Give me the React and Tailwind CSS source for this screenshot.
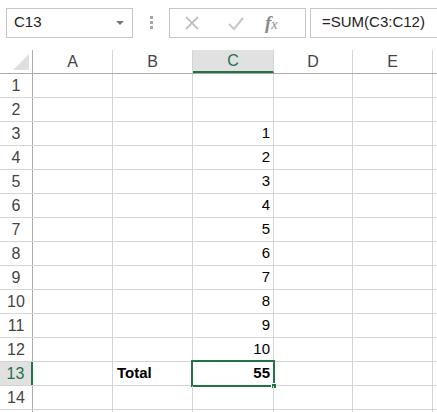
import React from "react";

const cols = [
  { key: "A", w: 80 },
  { key: "B", w: 80 },
  { key: "C", w: 81 },
  { key: "D", w: 79 },
  { key: "E", w: 80 },
  { key: "F", w: 80 },
];

const values = { 3: "1", 4: "2", 5: "3", 6: "4", 7: "5", 8: "6", 9: "7", 10: "8", 11: "9", 12: "10" };

const Toolbar = () => (
  <div className="flex items-center h-[50px] pt-[8px] pb-[13px] pl-[6px] bg-white">
    <div className="flex items-center justify-between w-[127px] h-[30px] border border-[#c6c6c6] pl-[7px] pr-[8px]">
      <span className="text-[15px] text-[#222]">C13</span>
      <span className="w-0 h-0 border-l-[4px] border-r-[4px] border-t-[4px] border-l-transparent border-r-transparent border-t-[#777]" />
    </div>
    <div className="flex flex-col gap-[2px] ml-[17px] mr-[16px]">
      <span className="w-[3px] h-[3px] bg-[#a6a6a6]" />
      <span className="w-[3px] h-[3px] bg-[#a6a6a6]" />
      <span className="w-[3px] h-[3px] bg-[#a6a6a6]" />
    </div>
    <div className="flex items-center w-[137px] h-[30px] border border-[#c6c6c6]">
      <svg width="16" height="16" viewBox="0 0 16 16" className="ml-[14px]">
        <path d="M2 2 L14 14 M14 2 L2 14" stroke="#b4b4b4" strokeWidth="1.6" fill="none" />
      </svg>
      <svg width="18" height="16" viewBox="0 0 18 16" className="ml-[27px]">
        <path d="M2 9 L7 14 L16 3" stroke="#c8c8c8" strokeWidth="2" fill="none" />
      </svg>
      <span className="ml-[20px] text-[19px] italic font-bold text-[#8a8a8a] font-['Liberation_Serif',serif] leading-none">
        f<span className="text-[14px] font-normal">x</span>
      </span>
    </div>
    <div className="flex items-center flex-1 h-[30px] ml-[4px] border border-[#c6c6c6] border-r-0 pl-[11px]">
      <span className="text-[15px] text-[#222] whitespace-nowrap">=SUM(C3:C12)</span>
    </div>
  </div>
);

const HeaderRow = () => (
  <div className="flex h-[24px] border-b border-[#ababab]">
    <div className="relative w-[33px] shrink-0 border-r border-[#ababab]">
      <svg className="absolute right-[3px] bottom-[3px]" width="16" height="16" viewBox="0 0 16 16">
        <path d="M16 0 L16 16 L0 16 Z" fill="#dfdfdf" />
      </svg>
    </div>
    {cols.map((c) => (
      <div
        key={c.key}
        style={{ width: c.w }}
        className={
          c.key === "C"
            ? "shrink-0 flex items-center justify-center border-r border-[#d4d4d4] bg-[#e1e1e1] border-b-2 border-b-[#217346] text-[#217346] text-[16px]"
            : "shrink-0 flex items-center justify-center border-r border-[#d4d4d4] text-[#444] text-[16px]"
        }
      >
        {c.key === "F" ? null : c.key}
      </div>
    ))}
  </div>
);

const Row = ({ n }) => {
  const sel = n === 13;
  return (
    <div className="flex h-[24px] border-b border-[#d4d4d4]">
      <div
        className={
          sel
            ? "w-[33px] shrink-0 flex items-center justify-center bg-[#e1e1e1] border-r-2 border-[#217346] text-[#217346] text-[16px]"
            : "w-[33px] shrink-0 flex items-center justify-center border-r border-[#ababab] text-[#444] text-[16px]"
        }
      >
        {n}
      </div>
      {cols.map((c) => {
        let content = null;
        if (c.key === "C" && values[n]) content = <span className="text-[15px] text-black">{values[n]}</span>;
        if (c.key === "C" && sel) content = <span className="text-[15px] font-bold text-black">55</span>;
        if (c.key === "B" && sel) content = <span className="text-[15px] font-bold text-black">Total</span>;
        const isSelCell = c.key === "C" && sel;
        return (
          <div
            key={c.key}
            style={{ width: c.w }}
            className={
              "relative shrink-0 flex items-end border-r border-[#d4d4d4] pb-[1px] " +
              (c.key === "B" ? "justify-start pl-[4px]" : "justify-end pr-[3px]")
            }
          >
            {content}
            {isSelCell && (
              <>
                <span className="absolute -left-[2px] -top-[2px] -right-[2px] -bottom-[2px] border-2 border-[#217346] pointer-events-none" />
                <span className="absolute -right-[4px] -bottom-[4px] w-[6px] h-[6px] bg-[#217346] border border-white" />
              </>
            )}
          </div>
        );
      })}
    </div>
  );
};

export default function App() {
  return (
    <div className="w-[437px] h-[412px] overflow-hidden bg-white font-['Liberation_Sans',Arial,sans-serif]">
      <Toolbar />
      <div className="w-[520px]">
        <HeaderRow />
        {Array.from({ length: 14 }, (_, i) => (
          <Row key={i + 1} n={i + 1} />
        ))}
        <div className="flex h-[24px]">
          <div className="w-[33px] shrink-0 border-r border-[#ababab]" />
          {cols.map((c) => (
            <div key={c.key} style={{ width: c.w }} className="shrink-0 border-r border-[#d4d4d4]" />
          ))}
        </div>
      </div>
    </div>
  );
}
